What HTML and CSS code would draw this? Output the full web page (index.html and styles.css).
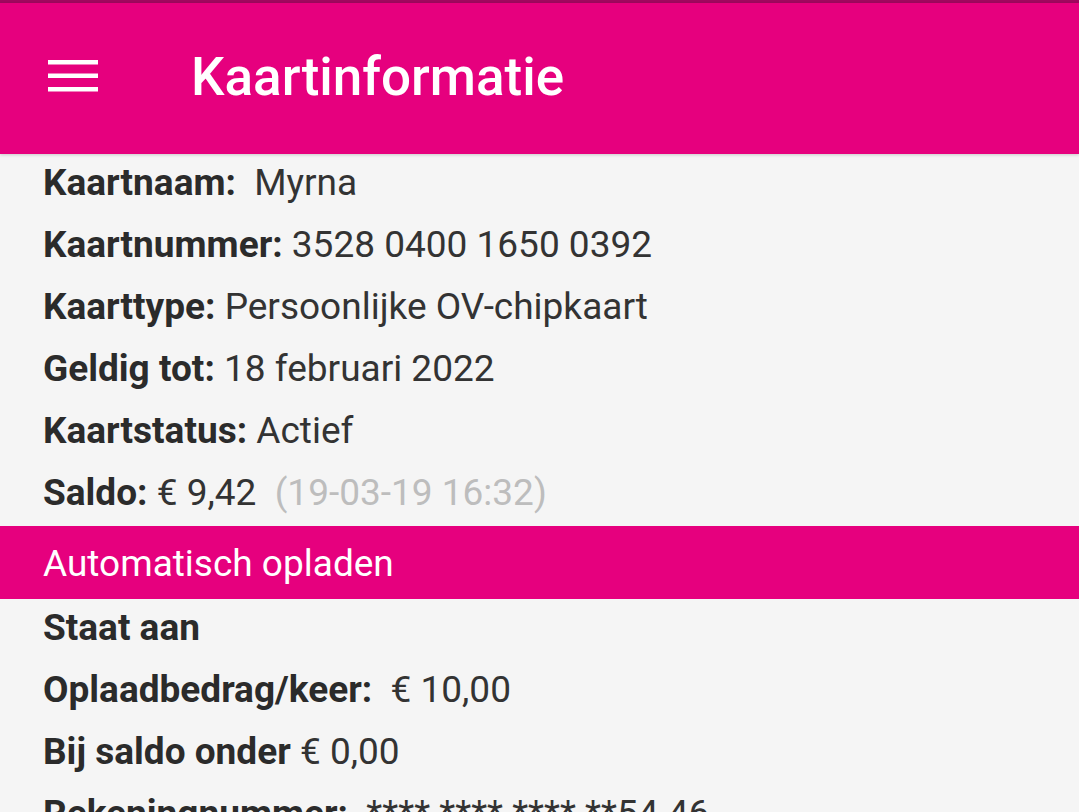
FILE: index.html
```html
<!DOCTYPE html>
<html lang="nl">
<head>
<meta charset="utf-8">
<title>Kaartinformatie</title>
<link rel="stylesheet" href="styles.css">
</head>
<body>
<div class="statusbar"></div>
<header class="appbar">
  <svg class="menu" width="50" height="34" viewBox="0 0 50 34" aria-hidden="true">
    <rect x="0" y="1" width="50" height="4.5" fill="#fff"/>
    <rect x="0" y="14.5" width="50" height="4.5" fill="#fff"/>
    <rect x="0" y="28" width="50" height="4.5" fill="#fff"/>
  </svg>
  <h1 class="title">Kaartinformatie</h1>
</header>
<main>
  <section class="rows first">
    <p class="row"><b>Kaartnaam:</b>&nbsp; Myrna</p>
    <p class="row"><b>Kaartnummer:</b> 3528 0400 1650 0392</p>
    <p class="row"><b>Kaarttype:</b> Persoonlijke OV-chipkaart</p>
    <p class="row"><b>Geldig tot:</b> 18 februari 2022</p>
    <p class="row"><b>Kaartstatus:</b> Actief</p>
    <p class="row"><b>Saldo:</b> € 9,42&nbsp; <span class="muted">(19-03-19 16:32)</span></p>
  </section>
  <h2 class="section-head">Automatisch opladen</h2>
  <section class="rows second">
    <p class="row"><b>Staat aan</b></p>
    <p class="row"><b>Oplaadbedrag/keer:</b>&nbsp; € 10,00</p>
    <p class="row"><b>Bij saldo onder</b> € 0,00</p>
    <p class="row"><b>Rekeningnummer:</b>&nbsp; **** **** **** **54 46</p>
  </section>
</main>
</body>
</html>
```
FILE: styles.css
```css
html, body {
  margin: 0;
  padding: 0;
}
body {
  width: 1079px;
  height: 812px;
  overflow: hidden;
  background: #f5f5f5;
  font-family: Roboto, "Noto Sans", sans-serif;
  color: #333333;
}
.statusbar {
  height: 3px;
  background: #a0085e;
}
.appbar {
  height: 151px;
  background: #e6007e;
  display: flex;
  align-items: center;
  padding-left: 48px;
  box-shadow: 0 1px 3px rgba(0,0,0,0.18);
  position: relative;
  z-index: 1;
}
.menu {
  display: block;
  margin-top: -6px;
}
.title {
  margin: -4px 0 0 93px;
  font-size: 53px;
  font-weight: 500;
  color: #ffffff;
}
.rows {
  padding-left: 43px;
}
.rows.first {
  margin-top: -2px;
  margin-bottom: 2px;
}
.rows.second {
  margin-top: -2px;
}
.row {
  margin: 0;
  font-size: 37px;
  line-height: 62px;
  height: 62px;
  white-space: nowrap;
}
.row b {
  font-weight: 700;
  color: #2b2b2b;
}
.muted {
  color: #bdbdbd;
}
.section-head {
  margin: 0;
  height: 73px;
  background: #e6007e;
  color: #ffffff;
  font-size: 37px;
  font-weight: 400;
  line-height: 76px;
  padding-left: 43px;
}
```
